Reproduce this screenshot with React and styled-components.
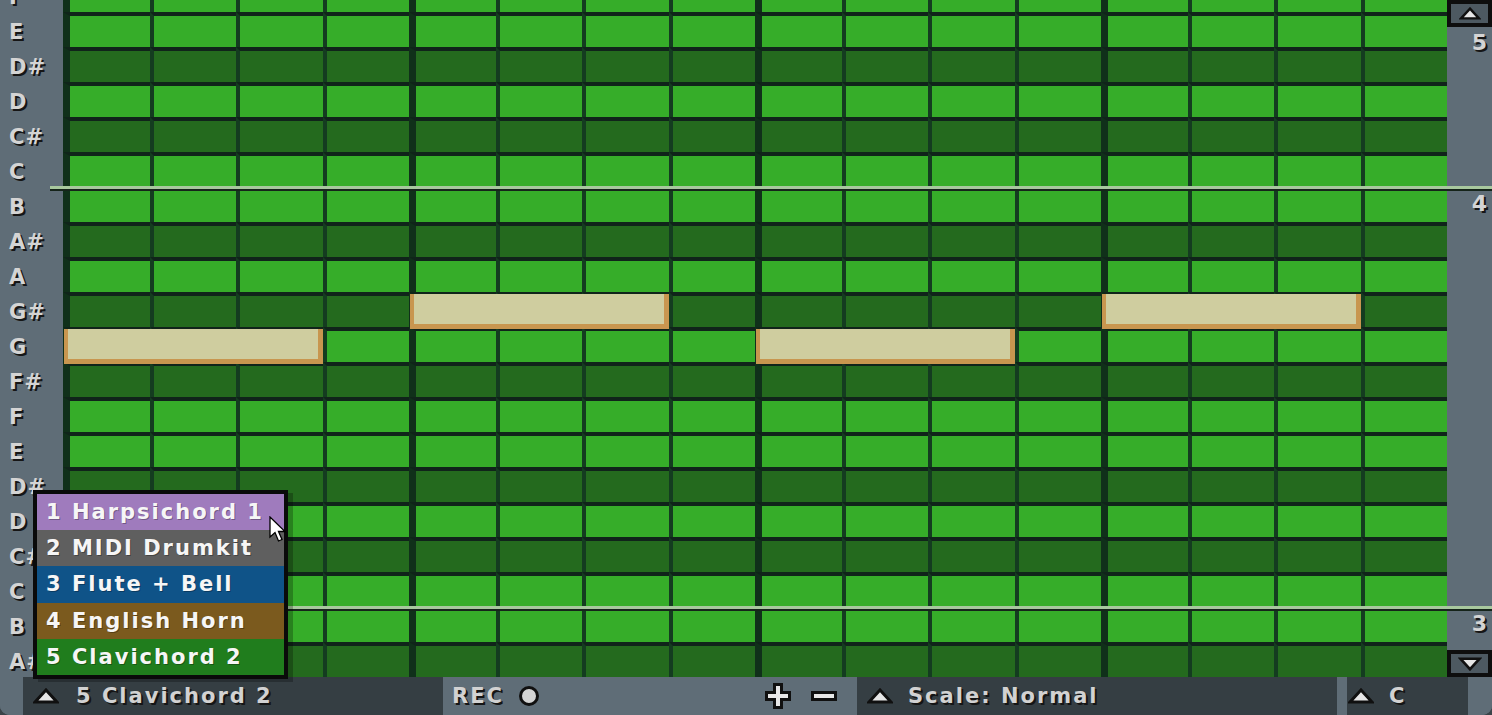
import React from "react";
import styled, { createGlobalStyle } from "styled-components";

const GRAY = "#5f6d77";
const DARK = "#353e43";
const LIGHT_G = "#36ad29";
const DARK_G = "#246a1e";
const HSEP = "#10241a";
const VSEP = "#143c20";
const BEAT = "#10301a";
const FONT = `"DejaVu Sans", "Liberation Sans", sans-serif`;

const Global = createGlobalStyle`
  html, body { margin: 0; padding: 0; background: #3b4449; overflow: hidden; }
  #root { width: 1492px; height: 715px; }
`;

const AppFrame = styled.div`
  position: relative;
  width: 1492px;
  height: 715px;
  display: grid;
  grid-template-rows: 677px 38px;
  background: ${GRAY};
  border-radius: 0 0 10px 10px;
  overflow: hidden;
  font-family: ${FONT};
`;

const Body = styled.div`
  display: flex;
  overflow: hidden;
`;

const Roll = styled.div`
  flex: 1;
  display: flex;
  flex-direction: column;
  margin-top: -23px;
`;

const Row = styled.div`
  position: relative;
  display: flex;
  height: 35px;
  flex: none;
`;

const Label = styled.div`
  width: 63px;
  flex: none;
  box-sizing: border-box;
  padding: 4px 0 0 9px;
  display: flex;
  align-items: center;
  background: ${GRAY};
  color: #d4d4d4;
  font-weight: bold;
  font-size: 21px;
  letter-spacing: 1px;
  text-shadow: 2px 2px 0 #161616;
  overflow: hidden;
  white-space: nowrap;
`;

const Cells = styled.div`
  flex: 1;
  display: grid;
  grid-template-columns: repeat(16, 1fr);
  grid-template-rows: 35px;
`;

const Cell = styled.div`
  grid-row: 1;
  grid-column: ${(p) => p.$col};
  box-sizing: border-box;
  border-top: 4px solid ${HSEP};
  border-left: ${(p) => (p.$beat ? `7px solid ${BEAT}` : `4px solid ${VSEP}`)};
  background: ${(p) => (p.$sharp ? DARK_G : LIGHT_G)};
`;

const Note = styled.div`
  grid-row: 1;
  grid-column: ${(p) => p.$col} / span ${(p) => p.$span};
  position: relative;
  top: 2px;
  z-index: 2;
  margin-left: 1px;
  height: 35px;
  box-sizing: border-box;
  background: #cfcd9f;
  border-left: 4px solid #c8964f;
  border-right: 5px solid #c8964f;
  border-bottom: 5px solid #c8964f;
`;

const OctaveLine = styled.div`
  position: absolute;
  top: -1px;
  left: 50px;
  right: -45px;
  height: 3px;
  background: #a8c89e;
  border-bottom: 2px solid #15241a;
  z-index: 3;
`;

const RightPanel = styled.div`
  width: 45px;
  flex: none;
  display: flex;
  flex-direction: column;
  background: ${GRAY};
`;

const ScrollButton = styled.div`
  height: 27px;
  box-sizing: border-box;
  border: 4px solid #0e0e0e;
  background: #4d5961;
  display: flex;
  align-items: center;
  justify-content: center;
  margin-top: ${(p) => (p.$bottom ? "auto" : "0")};
`;

const OctaveNum = styled.div`
  margin-top: ${(p) => p.$gap}px;
  line-height: 20px;
  text-align: right;
  padding-right: 5px;
  color: #d4d4d4;
  font-weight: bold;
  font-size: 22px;
  text-shadow: 2px 2px 0 #161616;
`;

const BottomBar = styled.div`
  display: flex;
  background: ${GRAY};
  color: #d2d2d2;
  font-weight: bold;
  font-size: 21px;
  letter-spacing: 2px;
  text-shadow: 2px 2px 0 #151515;
  white-space: nowrap;
`;

const Segment = styled.div`
  width: ${(p) => p.$w}px;
  flex: none;
  box-sizing: border-box;
  display: flex;
  align-items: center;
  background: ${(p) => (p.$dark ? DARK : GRAY)};
  padding-left: ${(p) => p.$pl || 0}px;
  gap: ${(p) => p.$gap || 0}px;
`;

const Push = styled.div`
  flex: 1;
`;

const IconGroup = styled.div`
  display: flex;
  align-items: center;
  gap: 20px;
  padding-right: 20px;
`;

const Popup = styled.div`
  position: absolute;
  left: 33px;
  top: 490px;
  width: 255px;
  box-sizing: border-box;
  border: 4px solid #0a0a0a;
  box-shadow: 5px 3px 0 rgba(0, 0, 0, 0.25);
  z-index: 10;
  display: flex;
  flex-direction: column;
`;

const MenuItem = styled.div`
  height: 36.2px;
  display: flex;
  align-items: center;
  padding-left: 9px;
  background: ${(p) => p.$bg};
  color: #f6f6f6;
  font-weight: bold;
  font-size: 21px;
  letter-spacing: 2px;
  white-space: nowrap;
  text-shadow: 1px 1px 0 rgba(0, 0, 0, 0.3);
`;

const Cursor = styled.svg`
  position: absolute;
  left: 269px;
  top: 516px;
  z-index: 20;
`;

const UpTri = ({ w = 26, h = 16 }) => (
  <svg width={w} height={h} viewBox="0 0 26 16">
    <polygon points="13,2 24,14 2,14" fill="#e6e6e6" stroke="#101010" strokeWidth="3" strokeLinejoin="miter" />
  </svg>
);

const DownTri = () => (
  <svg width="24" height="14" viewBox="0 0 26 16">
    <polygon points="2,2 24,2 13,14" fill="#e6e6e6" stroke="#101010" strokeWidth="3" />
  </svg>
);

const RecIcon = () => (
  <svg width="22" height="22" viewBox="0 0 22 22">
    <circle cx="11" cy="11" r="8.5" fill="#d4d4d4" stroke="#101010" strokeWidth="3" />
  </svg>
);

const PlusIcon = () => (
  <svg width="26" height="26" viewBox="0 0 26 26">
    <rect x="0" y="8" width="26" height="10" fill="#101010" />
    <rect x="8" y="0" width="10" height="26" fill="#101010" />
    <rect x="3" y="11" width="20" height="4" fill="#e8e8e8" />
    <rect x="11" y="3" width="4" height="20" fill="#e8e8e8" />
  </svg>
);

const MinusIcon = () => (
  <svg width="26" height="10" viewBox="0 0 26 10">
    <rect x="0" y="0" width="26" height="10" fill="#101010" />
    <rect x="3" y="3" width="20" height="4" fill="#e8e8e8" />
  </svg>
);

const ROWS = ["F", "E", "D#", "D", "C#", "C", "B", "A#", "A", "G#", "G", "F#", "F", "E", "D#", "D", "C#", "C", "B", "A#"];
const NOTES = [
  { row: 10, col: 1, span: 3 },
  { row: 9, col: 5, span: 3 },
  { row: 10, col: 9, span: 3 },
  { row: 9, col: 13, span: 3 },
];
const MENU = [
  { label: "1 Harpsichord 1", bg: "#9f7bbd" },
  { label: "2 MIDI Drumkit", bg: "#5f5f5f" },
  { label: "3 Flute + Bell", bg: "#0f5388" },
  { label: "4 English Horn", bg: "#7b5a1e" },
  { label: "5 Clavichord 2", bg: "#207d1d" },
];

export default function App() {
  return (
    <>
      <Global />
      <AppFrame>
        <Body>
          <Roll>
            {ROWS.map((name, r) => {
              const sharp = name.includes("#");
              return (
                <Row key={r}>
                  {name === "B" && r > 0 && <OctaveLine />}
                  <Label>{name}</Label>
                  <Cells>
                    {Array.from({ length: 16 }, (_, c) => (
                      <Cell key={c} $col={c + 1} $beat={c % 4 === 0} $sharp={sharp} />
                    ))}
                    {NOTES.filter((n) => n.row === r).map((n, i) => (
                      <Note key={i} $col={n.col} $span={n.span} />
                    ))}
                  </Cells>
                </Row>
              );
            })}
          </Roll>
          <RightPanel>
            <ScrollButton>
              <UpTri w={22} h={13} />
            </ScrollButton>
            <OctaveNum $gap={6}>5</OctaveNum>
            <OctaveNum $gap={141}>4</OctaveNum>
            <OctaveNum $gap={400}>3</OctaveNum>
            <ScrollButton $bottom>
              <DownTri />
            </ScrollButton>
          </RightPanel>
        </Body>
        <BottomBar>
          <Segment $w={23} />
          <Segment $w={420} $dark $pl={10} $gap={17}>
            <UpTri />
            <span>5 Clavichord 2</span>
          </Segment>
          <Segment $w={414} $pl={9} $gap={14}>
            <span>REC</span>
            <RecIcon />
            <Push />
            <IconGroup>
              <PlusIcon />
              <MinusIcon />
            </IconGroup>
          </Segment>
          <Segment $w={480} $dark $pl={10} $gap={15}>
            <UpTri />
            <span>Scale: Normal</span>
          </Segment>
          <Segment $w={10} />
          <Segment $w={121} $dark $pl={1} $gap={15}>
            <UpTri />
            <span>C</span>
          </Segment>
          <Segment $w={24} />
        </BottomBar>
        <Popup>
          {MENU.map((m) => (
            <MenuItem key={m.label} $bg={m.bg}>
              {m.label}
            </MenuItem>
          ))}
        </Popup>
        <Cursor width="20" height="28" viewBox="0 0 20 28">
          <path d="M1 1 L1 21 L6 16.5 L9.5 25 L13 23.5 L9.5 15.5 L16 15.5 Z" fill="#ffffff" stroke="#000000" strokeWidth="1.3" strokeLinejoin="miter" />
        </Cursor>
      </AppFrame>
    </>
  );
}
